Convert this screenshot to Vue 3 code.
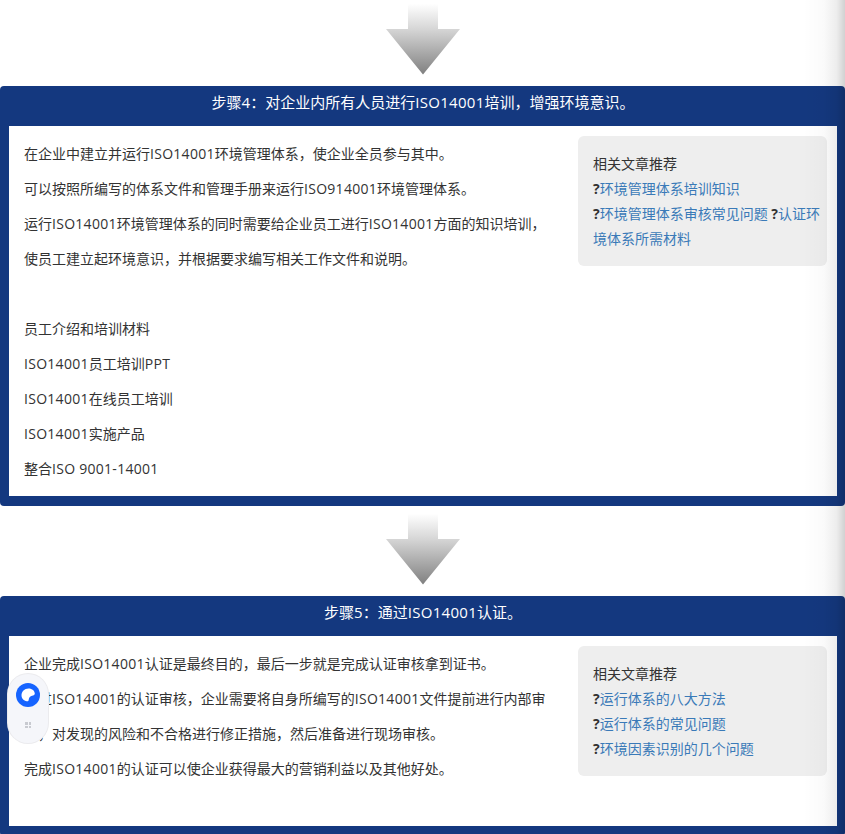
<script setup>
const steps = [
  {
    title: '步骤4：对企业内所有人员进行ISO14001培训，增强环境意识。',
    paras: [
      '在企业中建立并运行ISO14001环境管理体系，使企业全员参与其中。',
      '可以按照所编写的体系文件和管理手册来运行ISO914001环境管理体系。',
      '运行ISO14001环境管理体系的同时需要给企业员工进行ISO14001方面的知识培训，使员工建立起环境意识，并根据要求编写相关工作文件和说明。',
      '\u00a0',
      '员工介绍和培训材料',
      'ISO14001员工培训PPT',
      'ISO14001在线员工培训',
      'ISO14001实施产品',
      '整合ISO 9001-14001'
    ],
    links: [['环境管理体系培训知识'], ['环境管理体系审核常见问题', '认证环境体系所需材料']],
    tall: false
  },
  {
    title: '步骤5：通过ISO14001认证。',
    paras: [
      '企业完成ISO14001认证是最终目的，最后一步就是完成认证审核拿到证书。',
      '通过ISO14001的认证审核，企业需要将自身所编写的ISO14001文件提前进行内部审核，对发现的风险和不合格进行修正措施，然后准备进行现场审核。',
      '完成ISO14001的认证可以使企业获得最大的营销利益以及其他好处。'
    ],
    links: [['运行体系的八大方法'], ['运行体系的常见问题'], ['环境因素识别的几个问题']],
    tall: true
  }
]

// Latin runs sit a touch wider than the CJK text around them.
const runs = (text) =>
  text.split(/([A-Za-z0-9][A-Za-z0-9 -]*)/).filter(Boolean).map((t, i) => ({
    t,
    i,
    latin: /^[A-Za-z0-9]/.test(t)
  }))
</script>

<template>
  <div class="page">
    <template v-for="step in steps" :key="step.title">
      <div class="arrow-row">
        <svg class="arrow" width="74" height="90" viewBox="0 0 74 90" aria-hidden="true">
          <defs>
            <linearGradient id="arrowFill" x1="0" y1="0" x2="0" y2="1">
              <stop offset="0.1" stop-color="#ffffff" />
              <stop offset="0.42" stop-color="#d6d6d6" />
              <stop offset="1" stop-color="#808080" />
            </linearGradient>
          </defs>
          <path d="M22 0H52V33H74L37 78.500L0 33H22Z" fill="url(#arrowFill)" />
        </svg>
      </div>
      <section class="card">
        <h2 class="card-title">
          <span v-for="r in runs(step.title)" :key="r.i" :class="{ latin: r.latin }">{{ r.t }}</span>
        </h2>
        <div class="card-body" :class="{ tall: step.tall }">
          <div class="copy">
            <p v-for="(p, i) in step.paras" :key="i">
              <span v-for="r in runs(p)" :key="r.i" :class="{ latin: r.latin }">{{ r.t }}</span>
            </p>
          </div>
          <aside class="related">
            <div>相关文章推荐</div>
            <div v-for="(row, i) in step.links" :key="i">
              <template v-for="(l, j) in row" :key="l">
                <span v-if="j > 0">{{ ' ' }}</span><b>?</b><a>{{ l }}</a>
              </template>
            </div>
          </aside>
        </div>
      </section>
    </template>
    <div class="edge-shade"></div>
    <div class="widget">
      <svg width="24" height="24" viewBox="0 0 24 24" aria-hidden="true">
        <circle cx="12" cy="12" r="12" fill="#1664ff" />
        <path d="M5.500 12.300C5.500 8.500 8.500 5.500 12.500 5.500C16.200 5.500 18.800 8 18.800 10.600C18.800 11.700 18.100 12.300 17 12.500C14.500 12.800 13 14.300 12.700 16.800C12.600 18 11.800 18.500 10.800 18.300C7.800 17.800 5.500 15.400 5.500 12.300Z" fill="#fff" />
      </svg>
      <span class="grip"><i></i><i></i><i></i><i></i></span>
    </div>
  </div>
</template>

<style>
html, body { margin: 0; overflow: hidden; background: #fff; }
</style>

<style scoped>
.page {
  position: relative;
  height: 834px;
  overflow: hidden;
  font-family: "Open Sans", "Noto Sans CJK SC", sans-serif;
  font-size: 14px;
  color: #333;
  background: #fff;
}
.latin { letter-spacing: 0.28px; }
.arrow-row {
  height: 90px;
  display: flex;
  justify-content: center;
}
.arrow-row:first-child { margin-top: -4px; }
.arrow { display: block; }
.card {
  background: #14387f;
  border-radius: 4px;
  padding: 0 8px 10px 9px;
}
.card-title {
  margin: 0;
  height: 40px;
  padding-bottom: 8px;
  box-sizing: border-box;
  line-height: 32px;
  font-size: 15px;
  font-weight: 400;
  text-align: center;
  color: #fff;
}
.card-body {
  display: flex;
  justify-content: space-between;
  background: #fff;
  padding: 10px 10px 9.500px 15px;
}
.card-body.tall { min-height: 170.500px; }
.copy { width: 525px; }
.copy p { margin: 0; line-height: 35px; }
.related {
  box-sizing: border-box;
  width: 249px;
  height: 130px;
  padding: 15px 5px 15px 15px;
  background: #eee;
  border-radius: 6px;
  line-height: 25px;
}
.related b { font-weight: 700; }
.related a { color: #3a7ab8; }
.edge-shade {
  position: absolute;
  top: 0;
  right: 0;
  bottom: 0;
  width: 42px;
  background: linear-gradient(to right, rgba(0,0,0,0), rgba(0,0,0,0.02) 50%, rgba(0,0,0,0.07) 80%, rgba(0,0,0,0.18));
  pointer-events: none;
}
.widget {
  position: absolute;
  left: 8px;
  top: 674px;
  box-sizing: border-box;
  width: 40px;
  height: 69px;
  padding-top: 9px;
  display: flex;
  flex-direction: column;
  align-items: center;
  gap: 15px;
  border-radius: 20px;
  background: #f5f6fa;
  box-shadow: 0 0 0 1px #ebebee;
}
.widget svg { display: block; }
.grip {
  display: grid;
  grid-template-columns: 2.500px 2.500px;
  gap: 1px;
}
.grip i { width: 2.500px; height: 2.500px; background: #c8cad0; }
</style>
